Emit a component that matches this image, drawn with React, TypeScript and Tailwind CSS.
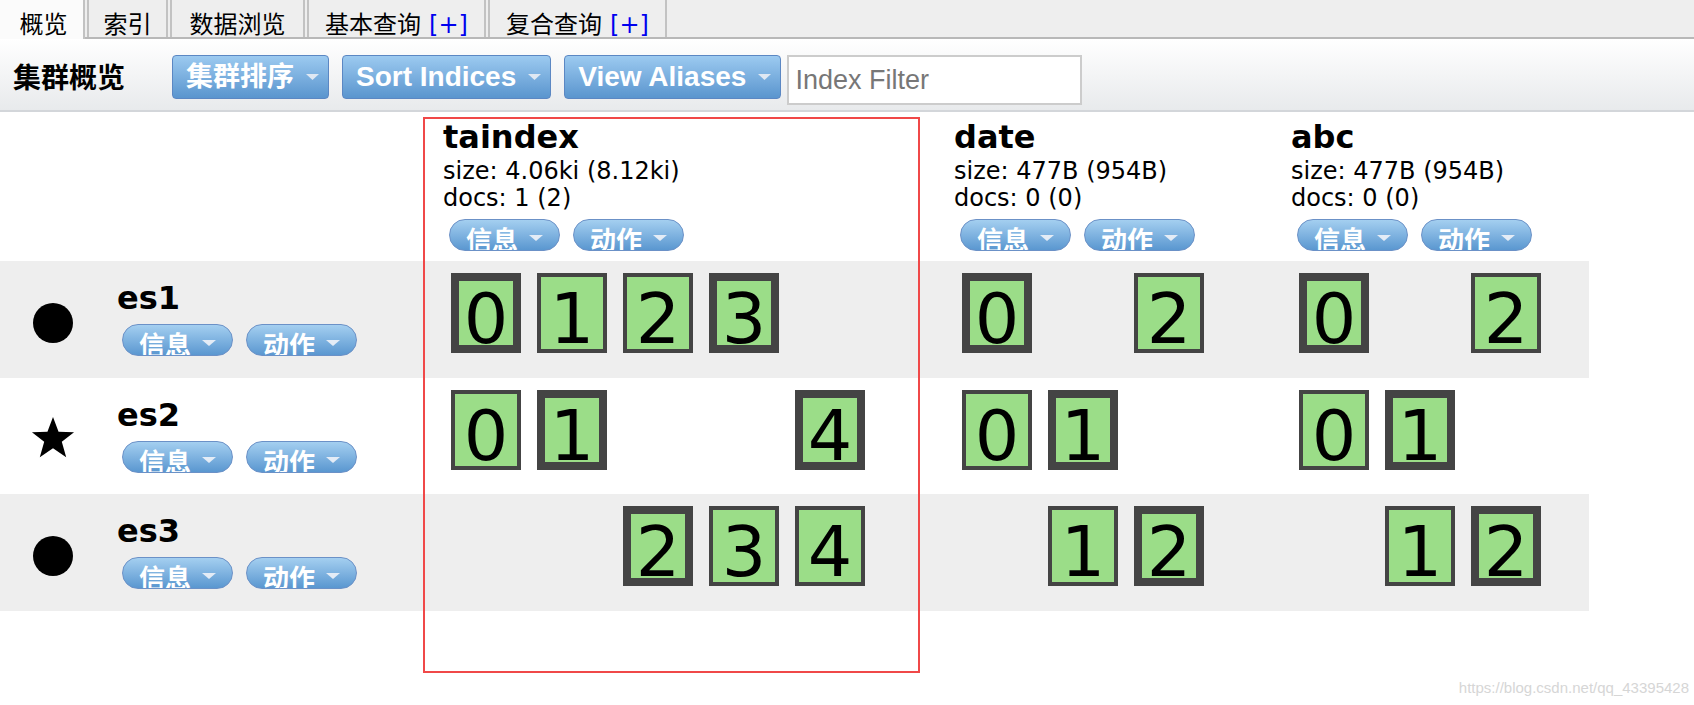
import React from 'react';

type Shard = { n: number; primary: boolean } | null;

const P = (n: number): Shard => ({ n, primary: true });
const R = (n: number): Shard => ({ n, primary: false });

const indices = [
  { name: 'taindex', size: '4.06ki (8.12ki)', docs: '1 (2)', width: 'w-[511px]' },
  { name: 'date', size: '477B (954B)', docs: '0 (0)', width: 'w-[337px]' },
  { name: 'abc', size: '477B (954B)', docs: '0 (0)', width: 'w-[308px]' },
];

// shard slots per node, one array per index
const nodes: { name: string; icon: 'dot' | 'star'; bg: string; h: string; shards: Shard[][] }[] = [
  {
    name: 'es1',
    icon: 'dot',
    bg: 'bg-[#eeeeee]',
    h: 'h-[117px]',
    shards: [
      [P(0), R(1), R(2), P(3), null],
      [P(0), null, R(2)],
      [P(0), null, R(2)],
    ],
  },
  {
    name: 'es2',
    icon: 'star',
    bg: 'bg-white',
    h: 'h-[116px]',
    shards: [
      [R(0), P(1), null, null, P(4)],
      [R(0), P(1), null],
      [R(0), P(1), null],
    ],
  },
  {
    name: 'es3',
    icon: 'dot',
    bg: 'bg-[#eeeeee]',
    h: 'h-[117px]',
    shards: [
      [null, null, P(2), R(3), R(4)],
      [null, R(1), P(2)],
      [null, R(1), P(2)],
    ],
  },
];

const tabs = [
  { label: '概览', w: 'w-[85px]', active: true },
  { label: '索引', w: 'w-[81px]' },
  { label: '数据浏览', w: 'w-[135px]' },
  { label: '基本查询', w: 'w-[179px]', plus: true },
  { label: '复合查询', w: 'w-[179px]', plus: true },
];

const Arrow = ({ w = 14, h = 7, color = '#e4ecf6' }: { w?: number; h?: number; color?: string }) => (
  <svg width={w} height={h} viewBox={`0 0 ${w} ${h}`}>
    <polygon points={`0,0 ${w},0 ${w / 2},${h}`} fill={color} />
  </svg>
);

const Pill = ({ label }: { label: string }) => (
  <div className="flex items-start w-[111px] h-[32px] rounded-full border border-[#6b91c7] bg-linear-to-b from-[#a4cff0] to-[#5a97d0] overflow-hidden pl-[16px] pt-[8px]">
    <span className="text-white font-bold text-[26px] leading-none whitespace-nowrap">{label}</span>
    <span className="ml-[11px] mt-[7px]">
      <Arrow w={14} h={6} />
    </span>
  </div>
);

const ToolButton = ({ label, size }: { label: string; size: string }) => (
  <button
    className={`flex items-center h-[44px] mt-[16px] rounded-[4px] border border-[#5b87c3] bg-linear-to-b from-[#9ccaf0] to-[#5a95ce] pl-[13px] pr-[9px] text-white font-bold ${size} font-['Liberation_Sans','Noto_Sans_CJK_SC',sans-serif] whitespace-nowrap`}
  >
    <span className="leading-none">{label}</span>
    <span className="ml-[12px]">
      <Arrow w={13} h={6} color="#dfe8f3" />
    </span>
  </button>
);

const ShardBox = ({ shard }: { shard: Shard }) => {
  if (!shard) return <div className="w-[70px] h-[80px] shrink-0" />;
  return (
    <div
      className={`w-[70px] h-[80px] shrink-0 bg-[#9bdd88] border-[#444444] flex items-center justify-center pt-[11px] ${
        shard.primary ? 'border-[8px]' : 'border-[4px]'
      }`}
    >
      <span className="text-[70px] leading-none text-black">{shard.n}</span>
    </div>
  );
};

const NodeIcon = ({ icon }: { icon: 'dot' | 'star' }) =>
  icon === 'dot' ? (
    <div className="w-[40px] h-[40px] rounded-full bg-black" />
  ) : (
    <svg width="46" height="44" viewBox="0 0 24 23">
      <polygon
        points="12,0.5 14.9,8.2 23,8.5 16.6,13.5 18.9,21.5 12,16.9 5.1,21.5 7.4,13.5 1,8.5 9.1,8.2"
        fill="#000"
      />
    </svg>
  );

export default function App() {
  return (
    <div className="relative w-[1694px] h-[705px] bg-white overflow-hidden font-['DejaVu_Sans','Noto_Sans_CJK_SC',sans-serif] text-black">
      {/* tab bar */}
      <div className="flex gap-[2px] h-[39px] bg-[#eeeeee] border-b-2 border-[#b8b8b8]">
        {tabs.map((t) => (
          <div
            key={t.label}
            className={`${t.w} flex justify-center pt-[13px] border-x-2 border-[#c2c2c2] text-[24px] leading-none whitespace-nowrap ${
              t.active ? 'bg-[#fbfbfb] h-[39px] border-l-0 pl-[4px]' : 'bg-[#eeeeee] h-[37px]'
            }`}
          >
            <span>{t.label}</span>
            {t.plus && <span className="ml-[8px] text-[#0000ee]">[+]</span>}
          </div>
        ))}
      </div>

      {/* toolbar */}
      <div className="flex items-start h-[73px] bg-linear-to-b from-white to-[#e8eaec] border-b-2 border-[#d3d6da]">
        <div className="ml-[13px] mt-[26px] w-[159px] text-[28px] font-bold leading-none">集群概览</div>
        <ToolButton label="集群排序" size="text-[27px]" />
        <div className="w-[13px]" />
        <ToolButton label="Sort Indices" size="text-[28px]" />
        <div className="w-[13px]" />
        <ToolButton label="View Aliases" size="text-[28px]" />
        <input
          placeholder="Index Filter"
          className="ml-[6px] mt-[16px] w-[295px] h-[50px] border-2 border-[#cccccc] bg-white pl-[6px] text-[27px] font-['Liberation_Sans',sans-serif] placeholder:text-[#777777] outline-none"
        />
      </div>

      {/* cluster table */}
      <div className="w-[1589px]">
        <div className="flex h-[149px] bg-white">
          <div className="w-[433px]" />
          {indices.map((ix) => (
            <div key={ix.name} className={`${ix.width} pl-[10px] pt-[8px]`}>
              <div className="text-[32px] font-bold leading-[34px]">{ix.name}</div>
              <div className="mt-[4px] text-[24px] leading-[27px]">size: {ix.size}</div>
              <div className="text-[24px] leading-[27px]">docs: {ix.docs}</div>
              <div className="flex gap-[13px] ml-[6px] mt-[7px]">
                <Pill label="信息" />
                <Pill label="动作" />
              </div>
            </div>
          ))}
        </div>

        {nodes.map((node) => (
          <div key={node.name} className={`flex ${node.h} ${node.bg}`}>
            <div className="w-[433px] flex items-start">
              <div className={`w-[106px] flex justify-center ${node.icon === 'star' ? 'pt-[38px]' : 'pt-[42px]'}`}>
                <NodeIcon icon={node.icon} />
              </div>
              <div className="ml-[11px] pt-[20px]">
                <div className="text-[32px] font-bold leading-[34px]">{node.name}</div>
                <div className="flex gap-[13px] ml-[5px] mt-[9px]">
                  <Pill label="信息" />
                  <Pill label="动作" />
                </div>
              </div>
            </div>
            {indices.map((ix, i) => (
              <div key={ix.name} className={`${ix.width} flex gap-[16px] pl-[18px] pt-[12px]`}>
                {node.shards[i].map((s, j) => (
                  <ShardBox key={j} shard={s} />
                ))}
              </div>
            ))}
          </div>
        ))}
      </div>

      {/* annotation box drawn over the taindex column */}
      <div className="absolute left-[423px] top-[117px] w-[497px] h-[556px] border-2 border-[#f04848] pointer-events-none" />

      {/* watermark */}
      <div className="absolute right-[5px] bottom-[10px] text-[15px] leading-none text-[#d6d6d6] font-['Liberation_Sans',sans-serif]">
        https://blog.csdn.net/qq_43395428
      </div>
    </div>
  );
}
